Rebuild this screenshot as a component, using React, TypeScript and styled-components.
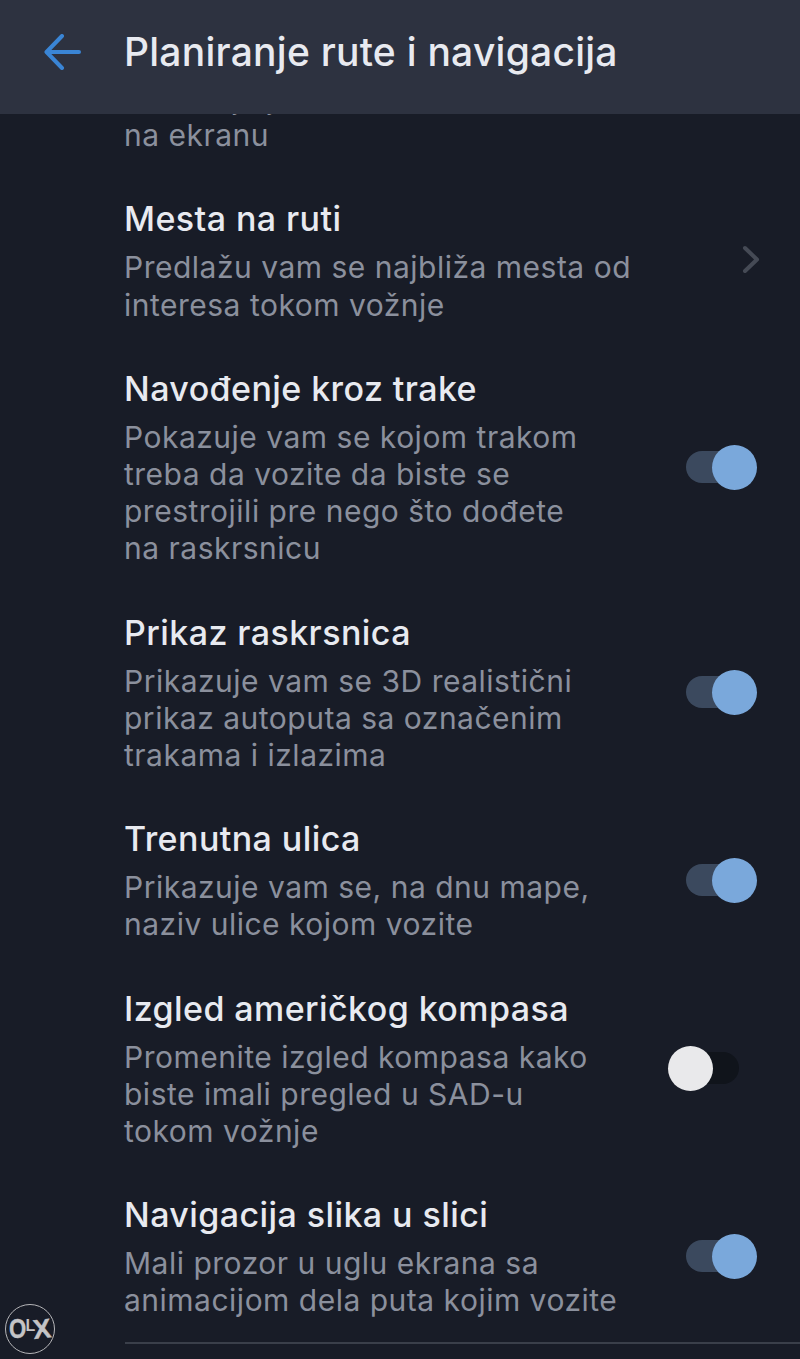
import React from 'react';
import styled, { createGlobalStyle } from 'styled-components';

const GlobalStyle = createGlobalStyle`
  html, body {
    margin: 0;
    padding: 0;
    background-color: #181c27;
  }
`

const Screen = styled.div`
  position: relative;
  width: 800px;
  height: 1359px;
  overflow: hidden;
  background-color: #181c27;
  font-family: Inter, "Noto Sans", sans-serif;
`

const Header = styled.header`
  position: relative;
  z-index: 1;
  display: flex;
  align-items: center;
  gap: 43px;
  height: 114px;
  padding: 0 0 10px 44px;
  box-sizing: border-box;
  background-color: #2d3240;
`

const BackIcon = styled.svg`
  width: 37px;
  height: 36px;
  flex: none;
  fill: none;
  stroke: #3a85d5;
  stroke-width: 4;
  stroke-linecap: round;
  stroke-linejoin: round;
`

const Title = styled.h1`
  margin: 0;
  font-size: 39px;
  font-weight: 500;
  letter-spacing: 0.25px;
  line-height: 44px;
  color: #e8eaf0;
`

const List = styled.main`
  display: flex;
  flex-direction: column;
  gap: 45px;
  margin-top: -34px;
  padding-left: 124px;
`

const Row = styled.section`
  display: flex;
  align-items: center;
  justify-content: space-between;
`

const RowText = styled.div`
  display: flex;
  flex-direction: column;
  gap: 10px;
`

const RowTitle = styled.h2`
  margin: 0;
  font-size: 34px;
  font-weight: 500;
  letter-spacing: 0.42px;
  line-height: 40px;
  color: #e8eaf0;
`

const RowDesc = styled.p`
  margin: 0;
  font-size: 30px;
  font-weight: 400;
  letter-spacing: 0.5px;
  line-height: 37.2px;
  color: #8b909d;
`

const Chevron = styled.svg`
  width: 19px;
  height: 29px;
  margin: 0 39px 4px 0;
  fill: none;
  stroke: #454a55;
  stroke-width: 4;
  stroke-linecap: round;
  stroke-linejoin: round;
`

const ToggleBox = styled.div<{ $on: boolean }>`
  position: relative;
  width: 71px;
  height: 45px;
  flex: none;
  margin-right: ${(props) => (props.$on ? '43px' : '61px')};
  margin-bottom: 1px;
`

const ToggleTrack = styled.div<{ $on: boolean }>`
  position: absolute;
  top: 6px;
  bottom: 7px;
  left: ${(props) => (props.$on ? '0' : '12px')};
  right: ${(props) => (props.$on ? '12px' : '0')};
  border-radius: 16px;
  background-color: ${(props) => (props.$on ? '#3b495e' : '#10141b')};
`

const ToggleKnob = styled.div<{ $on: boolean }>`
  position: absolute;
  top: 0;
  left: ${(props) => (props.$on ? '26px' : '0')};
  width: 45px;
  height: 45px;
  border-radius: 50%;
  background-color: ${(props) => (props.$on ? '#7aa8db' : '#e9e9eb')};
`

const Divider = styled.hr`
  margin: 22px 0 0 125px;
  border: 0;
  height: 2px;
  background-color: #3a3f4a;
`

const OlxBadge = styled.div`
  position: absolute;
  left: 5px;
  top: 1304px;
  z-index: 2;
  display: flex;
  align-items: center;
  justify-content: center;
  width: 50px;
  height: 50px;
  box-sizing: border-box;
  border: 1px solid #b5b5b8;
  border-radius: 50%;
  font-family: "Liberation Sans", Arial, sans-serif;
  font-weight: 700;
  color: #c4c4c6;
`

const OlxO = styled.span`
  margin: 0 -2px 0 -2px;
  font-size: 27px;
  line-height: 1;
  transform: scaleX(0.82);
  -webkit-text-stroke: 0.4px #c4c4c6;
`

const OlxL = styled.span`
  margin-right: -2px;
  font-size: 16px;
  line-height: 1;
  transform: translateY(-3px);
`

const OlxX = styled.span`
  font-size: 27px;
  line-height: 1;
  transform: rotate(-6deg);
  -webkit-text-stroke: 0.4px #c4c4c6;
`

const Toggle: React.FC<{ on: boolean }> = ({ on }) => (
  <ToggleBox $on={on}>
    <ToggleTrack $on={on} />
    <ToggleKnob $on={on} />
  </ToggleBox>
)

interface Item {
  title: string,
  lines: string[],
  control: 'chevron' | 'on' | 'off',
}

const items: Item[] = [
  {
    title: 'Mesta na ruti',
    lines: ['Predlažu vam se najbliža mesta od', 'interesa tokom vožnje'],
    control: 'chevron',
  },
  {
    title: 'Navođenje kroz trake',
    lines: [
      'Pokazuje vam se kojom trakom',
      'treba da vozite da biste se',
      'prestrojili pre nego što dođete',
      'na raskrsnicu',
    ],
    control: 'on',
  },
  {
    title: 'Prikaz raskrsnica',
    lines: ['Prikazuje vam se 3D realistični', 'prikaz autoputa sa označenim', 'trakama i izlazima'],
    control: 'on',
  },
  {
    title: 'Trenutna ulica',
    lines: ['Prikazuje vam se, na dnu mape,', 'naziv ulice kojom vozite'],
    control: 'on',
  },
  {
    title: 'Izgled američkog kompasa',
    lines: ['Promenite izgled kompasa kako', 'biste imali pregled u SAD-u', 'tokom vožnje'],
    control: 'off',
  },
  {
    title: 'Navigacija slika u slici',
    lines: ['Mali prozor u uglu ekrana sa', 'animacijom dela puta kojim vozite'],
    control: 'on',
  },
]

const App: React.FC = () => {
  return (
    <Screen>
      <GlobalStyle />
      <Header>
        <BackIcon viewBox="0 0 37 36">
          <path d="M35 18H3M18 2L2.500 18L18 34" />
        </BackIcon>
        <Title>Planiranje rute i navigacija</Title>
      </Header>
      <List>
        <RowDesc>
          Prikazuje je
          <br />
          na ekranu
        </RowDesc>
        {items.map((item) => (
          <Row key={item.title}>
            <RowText>
              <RowTitle>{item.title}</RowTitle>
              <RowDesc>
                {item.lines.map((line) => (
                  <React.Fragment key={line}>
                    {line}
                    <br />
                  </React.Fragment>
                ))}
              </RowDesc>
            </RowText>
            {item.control === 'chevron' ? (
              <Chevron viewBox="0 0 19 29">
                <path d="M3 3L15 14.500L3 26" />
              </Chevron>
            ) : (
              <Toggle on={item.control === 'on'} />
            )}
          </Row>
        ))}
      </List>
      <Divider />
      <OlxBadge>
        <OlxO>O</OlxO>
        <OlxL>L</OlxL>
        <OlxX>X</OlxX>
      </OlxBadge>
    </Screen>
  )
}

export default App;
